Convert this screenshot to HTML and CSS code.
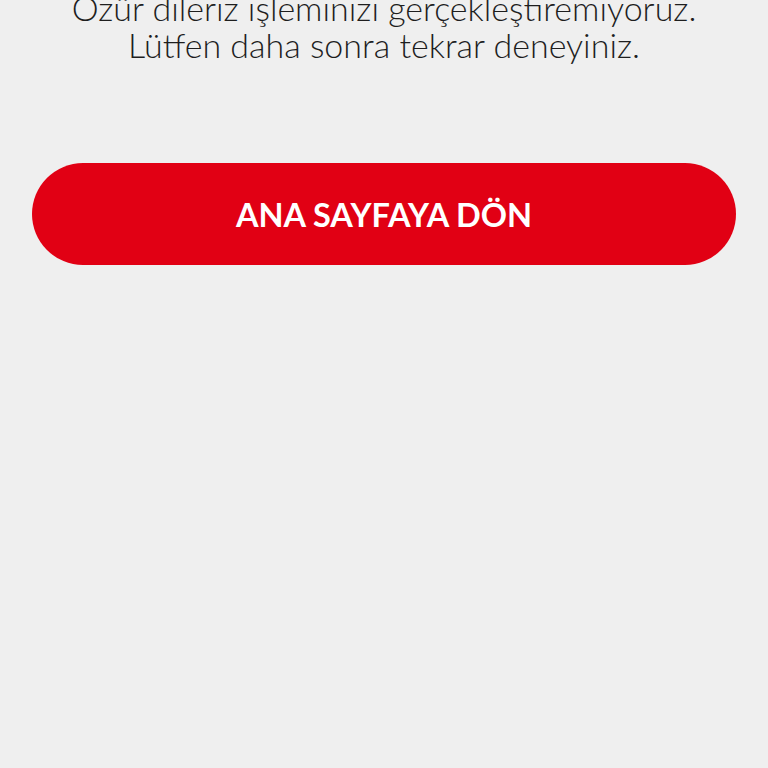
FILE: index.html
```html
<!DOCTYPE html>
<html lang="tr">
<head>
<meta charset="utf-8">
<link rel="stylesheet" href="styles.css">
</head>
<body>
<main class="page">
  <p class="message">Özür dileriz işleminizi gerçekleştiremiyoruz.<br>Lütfen daha sonra tekrar deneyiniz.</p>
  <a class="home-btn" href="#">ANA SAYFAYA DÖN</a>
</main>
</body>
</html>
```
FILE: styles.css
```css
html, body {
  margin: 0;
  padding: 0;
  background: #efefef;
  height: 100%;
}
body {
  font-family: Lato, "Open Sans", sans-serif;
  color: #222;
}
.page {
  display: flex;
  flex-direction: column;
  align-items: stretch;
  padding: 0 32px;
}
.message {
  margin: -11px 0 0;
  font-size: 34px;
  line-height: 37px;
  font-weight: 300;
  text-align: center;
  color: #1e1e1e;
}
.home-btn {
  margin-top: 100px;
  height: 102px;
  border-radius: 51px;
  background: #e10014;
  color: #fff;
  text-decoration: none;
  display: flex;
  align-items: center;
  justify-content: center;
  font-size: 32.5px;
  font-weight: 700;
  letter-spacing: 0;
}
```
